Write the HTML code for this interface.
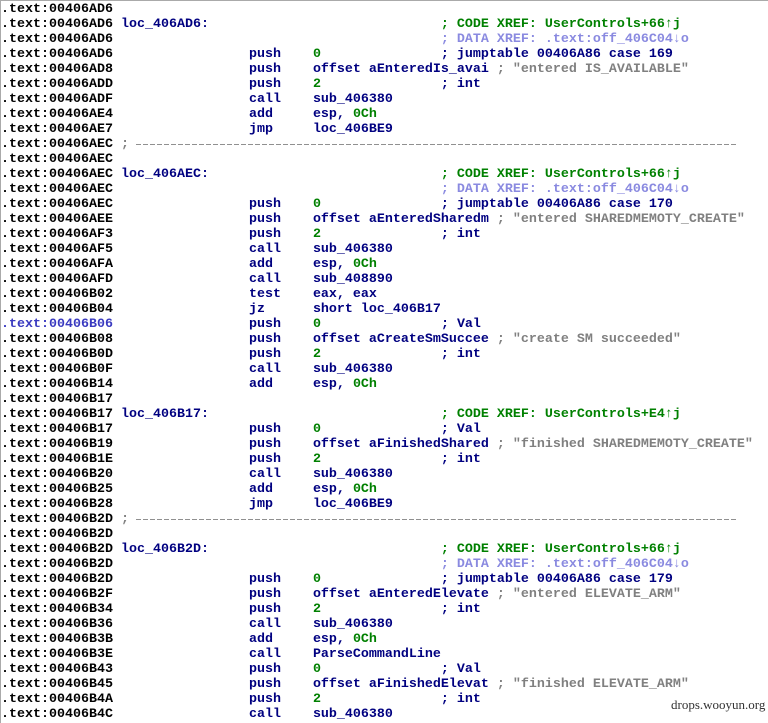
<!DOCTYPE html>
<html><head><meta charset="utf-8"><style>
html,body{margin:0;padding:0;background:#fff;width:768px;height:723px;overflow:hidden;position:relative}
pre{margin:0;position:absolute;left:1px;top:2px;font-family:"Liberation Mono","DejaVu Sans Mono",monospace;font-weight:bold;font-size:13.33px;line-height:15px;color:#000;white-space:pre}
.l{color:#000080}.m{color:#000080}.n{color:#008000}.g{color:#808080}.cx{color:#008000}.dx{color:#8a8ae0}.a{color:#3a3ac0}
.sep{position:absolute;left:136px;width:600px;height:1px;background:repeating-linear-gradient(90deg,#909090 0 5px,transparent 5px 7px)}
.wm{position:absolute;left:671px;top:697px;font-family:"Liberation Serif",serif;font-size:13px;color:#333}
.bl{position:absolute;left:0;top:0;width:1px;height:723px;background:#aaa}
.bt{position:absolute;left:0;top:0;width:768px;height:1px;background:#aaa}
</style></head><body>
<div class="bl"></div><div class="bt"></div>
<pre>.text:00406AD6
.text:00406AD6 <span class="l">loc_406AD6:</span>                             <span class="cx">; CODE XREF: UserControls+66↑j</span>
.text:00406AD6                                         <span class="dx">; DATA XREF: .text:off_406C04↓o</span>
.text:00406AD6                 <span class="m">push    <span class="n">0</span>               ; jumptable 00406A86 case 169</span>
.text:00406AD8                 <span class="m">push    offset aEnteredIs_avai</span> <span class="g">; "entered IS_AVAILABLE"</span>
.text:00406ADD                 <span class="m">push    <span class="n">2</span>               ; int</span>
.text:00406ADF                 <span class="m">call    sub_406380</span>
.text:00406AE4                 <span class="m">add     esp, <span class="n">0Ch</span></span>
.text:00406AE7                 <span class="m">jmp     loc_406BE9</span>
.text:00406AEC <span class="g">;</span>
.text:00406AEC
.text:00406AEC <span class="l">loc_406AEC:</span>                             <span class="cx">; CODE XREF: UserControls+66↑j</span>
.text:00406AEC                                         <span class="dx">; DATA XREF: .text:off_406C04↓o</span>
.text:00406AEC                 <span class="m">push    <span class="n">0</span>               ; jumptable 00406A86 case 170</span>
.text:00406AEE                 <span class="m">push    offset aEnteredSharedm</span> <span class="g">; "entered SHAREDMEMOTY_CREATE"</span>
.text:00406AF3                 <span class="m">push    <span class="n">2</span>               ; int</span>
.text:00406AF5                 <span class="m">call    sub_406380</span>
.text:00406AFA                 <span class="m">add     esp, <span class="n">0Ch</span></span>
.text:00406AFD                 <span class="m">call    sub_408890</span>
.text:00406B02                 <span class="m">test    eax, eax</span>
.text:00406B04                 <span class="m">jz      short loc_406B17</span>
<span class="a">.text:00406B06</span>                 <span class="m">push    <span class="n">0</span>               ; Val</span>
.text:00406B08                 <span class="m">push    offset aCreateSmSuccee</span> <span class="g">; "create SM succeeded"</span>
.text:00406B0D                 <span class="m">push    <span class="n">2</span>               ; int</span>
.text:00406B0F                 <span class="m">call    sub_406380</span>
.text:00406B14                 <span class="m">add     esp, <span class="n">0Ch</span></span>
.text:00406B17
.text:00406B17 <span class="l">loc_406B17:</span>                             <span class="cx">; CODE XREF: UserControls+E4↑j</span>
.text:00406B17                 <span class="m">push    <span class="n">0</span>               ; Val</span>
.text:00406B19                 <span class="m">push    offset aFinishedShared</span> <span class="g">; "finished SHAREDMEMOTY_CREATE"</span>
.text:00406B1E                 <span class="m">push    <span class="n">2</span>               ; int</span>
.text:00406B20                 <span class="m">call    sub_406380</span>
.text:00406B25                 <span class="m">add     esp, <span class="n">0Ch</span></span>
.text:00406B28                 <span class="m">jmp     loc_406BE9</span>
.text:00406B2D <span class="g">;</span>
.text:00406B2D
.text:00406B2D <span class="l">loc_406B2D:</span>                             <span class="cx">; CODE XREF: UserControls+66↑j</span>
.text:00406B2D                                         <span class="dx">; DATA XREF: .text:off_406C04↓o</span>
.text:00406B2D                 <span class="m">push    <span class="n">0</span>               ; jumptable 00406A86 case 179</span>
.text:00406B2F                 <span class="m">push    offset aEnteredElevate</span> <span class="g">; "entered ELEVATE_ARM"</span>
.text:00406B34                 <span class="m">push    <span class="n">2</span>               ; int</span>
.text:00406B36                 <span class="m">call    sub_406380</span>
.text:00406B3B                 <span class="m">add     esp, <span class="n">0Ch</span></span>
.text:00406B3E                 <span class="m">call    ParseCommandLine</span>
.text:00406B43                 <span class="m">push    <span class="n">0</span>               ; Val</span>
.text:00406B45                 <span class="m">push    offset aFinishedElevat</span> <span class="g">; "finished ELEVATE_ARM"</span>
.text:00406B4A                 <span class="m">push    <span class="n">2</span>               ; int</span>
.text:00406B4C                 <span class="m">call    sub_406380</span></pre>
<div class="sep" style="top:144px"></div>
<div class="sep" style="top:519px"></div>
<div class="wm">drops.wooyun.org</div>
</body></html>
